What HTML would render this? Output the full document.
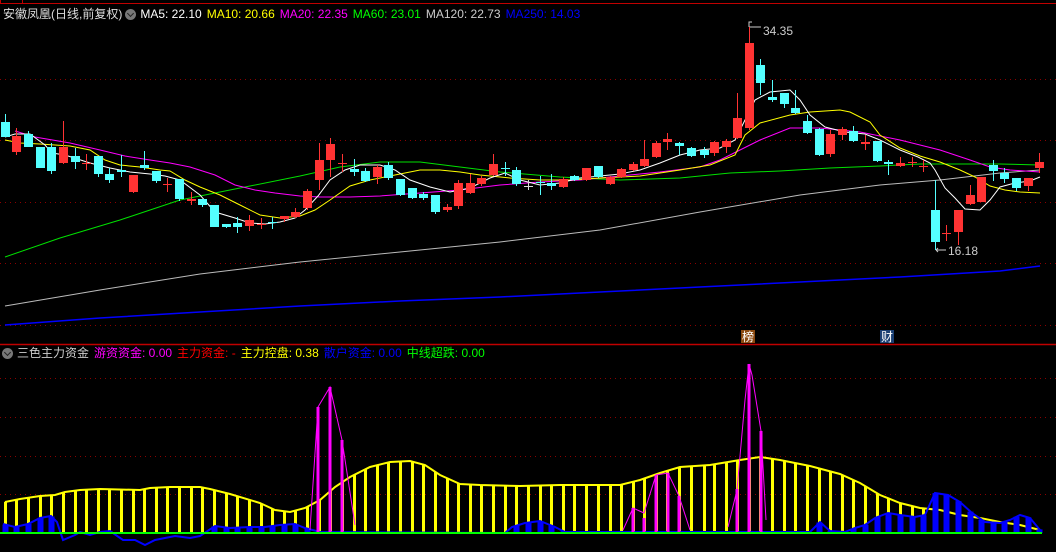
<!DOCTYPE html>
<html><head><meta charset="utf-8">
<style>
html,body{margin:0;padding:0;background:#000;width:1056px;height:552px;overflow:hidden}
svg{position:absolute;left:0;top:0}
.t{position:absolute;font-family:"Liberation Sans","Noto Sans CJK SC",sans-serif;font-size:12px;white-space:nowrap;line-height:14px}
.t span{margin-right:5px}
.ic{display:inline-block;width:11px;height:11px;border-radius:50%;background:#777;vertical-align:-2px;margin-right:4px;position:relative}
.ic:after{content:"";position:absolute;left:3px;top:2px;width:4px;height:4px;border-right:1.5px solid #222;border-bottom:1.5px solid #222;transform:rotate(45deg)}
</style></head><body>
<svg id="s" width="1056" height="552" xmlns="http://www.w3.org/2000/svg">
<g stroke="#8b0000" stroke-dasharray="1,4" stroke-width="1">
<line x1="0" y1="79.5" x2="1056" y2="79.5"/><line x1="0" y1="140.5" x2="1056" y2="140.5"/>
<line x1="0" y1="202.5" x2="1056" y2="202.5"/><line x1="0" y1="263.5" x2="1056" y2="263.5"/>
<line x1="0" y1="325.5" x2="1056" y2="325.5"/>
<line x1="0" y1="378.5" x2="1056" y2="378.5"/><line x1="0" y1="417.5" x2="1056" y2="417.5"/>
<line x1="0" y1="456.5" x2="1056" y2="456.5"/><line x1="0" y1="494.5" x2="1056" y2="494.5"/>
</g>
<line x1="0" y1="3.5" x2="1056" y2="3.5" stroke="#c00000"/>
<line x1="0.5" y1="0" x2="0.5" y2="3" stroke="#c00000"/><line x1="22.5" y1="0" x2="22.5" y2="3" stroke="#c00000"/>
<line x1="0" y1="344.5" x2="1056" y2="344.5" stroke="#c00000" stroke-width="1.5"/>
<rect x="741" y="330" width="14" height="13" fill="#8b4a10"/>
<text x="742" y="341" fill="#fff" font-size="12" font-family="Noto Sans CJK SC,sans-serif">榜</text>
<rect x="880" y="330" width="14" height="13" fill="#1a3f73"/>
<text x="881" y="341" fill="#fff" font-size="12" font-family="Noto Sans CJK SC,sans-serif">财</text>
<text x="763" y="35" fill="#ccc" font-size="12" font-family="Liberation Sans,sans-serif">34.35</text>
<path d="M749 27 v-5 h3 M749 27 h12" stroke="#ccc" fill="none"/>
<text x="948" y="255" fill="#ccc" font-size="12" font-family="Liberation Sans,sans-serif">16.18</text>
<path d="M936 250 h10 M936 250 l2 -2 M936 250 l2 2" stroke="#ccc" fill="none"/>
<g id="g"></g>
</svg>
<div class="t" style="left:3px;top:7px;color:#ddd"><span style="margin-right:3px">安徽凤凰(日线,前复权)</span><i class="ic"></i><span style="color:#fff">MA5: 22.10</span><span style="color:#ff0">MA10: 20.66</span><span style="color:#f0f">MA20: 22.35</span><span style="color:#0f0">MA60: 23.01</span><span style="color:#ccc">MA120: 22.73</span><span style="color:#00f">MA250: 14.03</span></div>
<div class="t" style="left:2px;top:346px;color:#ccc"><i class="ic"></i><span>三色主力资金</span><span style="color:#f0f">游资资金: 0.00</span><span style="color:#f00">主力资金: -</span><span style="color:#ff0">主力控盘: 0.38</span><span style="color:#00f">散户资金: 0.00</span><span style="color:#0f0">中线超跌: 0.00</span></div>
<script>
var NS="http://www.w3.org/2000/svg",G=document.getElementById("g");
function el(n,a){var e=document.createElementNS(NS,n);for(var k in a)e.setAttribute(k,a[k]);G.appendChild(e);return e}
function pl(p,c,w){el("polyline",{points:p.map(function(q){return q.join(",")}).join(" "),fill:"none",stroke:c,"stroke-width":w||1})}
function interp(p,x){if(x<=p[0][0])return p[0][1];for(var i=1;i<p.length;i++)if(x<=p[i][0]){var a=p[i-1],b=p[i];return a[1]+(b[1]-a[1])*(x-a[0])/(b[0]-a[0])}return p[p.length-1][1]}
var C=[[1,'c',122,137,114,137],[12,'r',136,152,128,155],[24,'c',134,147,131,147],[36,'c',147,168,147,168],[47,'c',147,171,143,174],[59,'r',147,163,121,164],[71,'c',156,162,148,169],[82,'r',163,164,154,170],[94,'c',156,174,156,177],[105,'c',174,180,168,183],[117,'c',170,172,155,177],[129,'r',175,192,175,193],[140,'c',165,168,151,170],[152,'c',171,181,171,183],[163,'r',184,185,178,192],[175,'c',179,199,179,201],[187,'r',199,201,192,205],[198,'c',199,205,199,207],[210,'c',205,227,205,227],[222,'c',224,227,224,228],[233,'c',223,227,217,233],[245,'r',220,226,215,231],[257,'r',224,225,218,229],[268,'c',222,223,217,229],[280,'r',216,219,216,222],[291,'r',212,217,208,218],[303,'r',191,208,189,210],[315,'r',160,180,143,190],[326,'r',144,160,138,177],[338,'r',163,164,154,172],
[350,'c',169,172,159,176],[361,'c',171,181,168,182],[373,'r',167,177,165,184],[384,'c',165,178,162,180],[396,'c',179,195,179,196],[408,'c',188,198,188,199],[419,'c',194,198,192,200],[431,'c',195,212,195,214],[443,'r',207,210,204,212],[454,'r',183,206,180,209],[466,'r',183,193,174,194],[477,'r',178,184,176,186],[489,'r',164,175,154,176],[501,'c',168,169,162,176],[512,'c',170,184,167,186],[524,'w',186,187,180,190],[536,'c',182,183,176,195],[547,'c',183,186,174,190],[559,'r',179,187,177,188],[570,'c',176,180,175,181],[582,'r',168,180,168,181],[594,'c',166,177,166,178],[606,'r',177,184,176,185],[617,'r',169,177,168,178],[629,'r',164,170,162,171],[640,'r',159,166,140,167],[652,'r',143,157,141,158],[663,'r',139,142,133,150],[675,'c',143,146,142,155],[687,'c',148,156,147,157],
[700,'c',150,155,147,158],[710,'r',142,153,141,156],[722,'r',141,147,139,153],[733,'r',118,138,93,139],[745,'r',43,128,27,130],[756,'c',65,83,59,95],[768,'c',97,100,80,102],[780,'c',93,104,93,108],[791,'c',108,113,90,114],[803,'c',121,133,115,134],[815,'c',129,155,128,156],[826,'r',134,154,130,157],[838,'r',129,135,127,140],[849,'c',131,141,126,142],[861,'r',142,144,135,150],[873,'c',141,161,141,162],[884,'c',162,164,160,175],[896,'r',163,166,157,167],[908,'r',162,163,157,167],[919,'r',166,167,160,172],[931,'c',210,242,180,250],[942,'r',233,234,225,241],[954,'r',210,232,210,245],[966,'r',195,204,185,205],[977,'r',177,202,177,202],[989,'c',165,171,160,181],[1000,'c',173,179,168,183],[1012,'c',178,188,178,191],[1024,'r',178,186,178,191],[1035,'r',162,168,153,173]];
var col={r:'#ff3333',c:'#54ffff',w:'#ddd'};
var MA250=[[5,325],[100,318],[200,312],[300,306],[400,301],[500,297],[600,292],[700,287],[800,282],[900,277],[1000,271],[1040,266]];
var MA120=[[5,306],[100,290],[200,274],[300,262],[400,252],[500,242],[600,230],[700,212],[800,195],[880,185],[940,180],[1000,173],[1040,170]];
var MA60=[[5,257],[60,238],[120,220],[180,200],[240,188],[300,176],[340,167],[380,162],[420,162],[460,167],[500,172],[560,177],[620,180],[680,178],[730,173],[780,171],[830,168],[880,166],[920,164],[960,164],[1000,164],[1040,165]];
var MA20=[[15,131],[35,137],[70,143],[100,150],[125,156],[150,160],[170,163],[190,167],[215,175],[235,185],[255,190],[275,193],[300,196],[320,197],[350,197],[380,196],[420,193],[460,190],[500,185],[540,182],[580,180],[620,176],[660,172],[700,167],[720,160],[740,150],[760,140],[790,128],[820,128],[860,132],[900,140],[940,150],[970,160],[990,167],[1010,170],[1040,172]];
var MA10=[[5,140],[20,143],[40,144],[70,146],[90,150],[105,160],[120,165],[140,167],[160,170],[170,171],[185,180],[200,187],[220,195],[240,205],[260,215],[280,218],[300,216],[315,210],[330,200],[350,186],[370,180],[395,175],[420,170],[440,170],[460,172],[480,175],[510,178],[540,180],[570,180],[600,178],[640,176],[680,170],[710,165],[735,155],[745,135],[760,123],[790,115],[810,112],[840,110],[850,112],[870,122],[880,135],[900,148],[920,156],[940,162],[960,170],[975,177],[990,186],[1005,190],[1020,192],[1040,193]];
var MA5=[[5,137],[15,134],[30,134],[45,145],[52,153],[65,155],[90,163],[110,168],[130,172],[150,174],[165,176],[180,180],[200,195],[215,212],[235,218],[250,223],[265,224],[280,222],[295,218],[305,210],[318,196],[330,180],[345,170],[360,165],[380,165],[395,170],[410,180],[430,187],[450,192],[470,188],[490,178],[505,173],[520,180],[540,185],[560,183],[580,178],[600,176],[620,174],[640,170],[660,163],[680,155],[700,150],[720,148],[735,140],[745,120],[755,100],[770,92],[790,90],[800,100],[810,115],[825,127],[845,132],[865,134],[880,140],[900,150],[918,157],[930,163],[935,170],[945,188],[955,198],[965,209],[980,210],[990,200],[1000,187],[1015,183],[1030,181],[1040,177]];
pl(MA250,'#0000ff',1.5);pl(MA120,'#bbb');pl(MA60,'#00e000');pl(MA20,'#ff00ff');pl(MA10,'#ffff00');pl(MA5,'#fff');
C.forEach(function(d){var x=d[0],c=col[d[1]],cx=x+4.5;
el("line",{x1:cx,y1:d[4],x2:cx,y2:d[5],stroke:c});
el("rect",{x:x,y:d[2],width:9,height:Math.max(1,d[3]-d[2]),fill:c});});
// bottom panel
var BASE=533;
var Y=[[5,502],[20,499],[40,496],[55,495],[65,492],[80,490],[100,489],[140,490],[150,488],[170,487],[200,487],[210,489],[230,494],[260,503],[275,510],[290,512],[305,508],[320,500],[335,487],[350,477],[370,467],[390,462],[410,461],[425,465],[440,475],[460,484],[480,485],[520,486],[560,485],[600,485],[620,485],[640,480],[660,473],[680,467],[710,465],[740,460],[760,457],[780,460],[810,466],[840,474],[860,483],[880,495],[900,503],[920,508],[940,510],[960,515],[980,518],[1000,522],[1020,525],[1040,530]];
var B=[[3,524],[15,527],[28,524],[40,518],[51,516],[57,522],[63,540],[75,535],[80,532],[90,535],[100,532],[110,531],[123,540],[135,540],[145,545],[155,540],[165,538],[175,536],[190,538],[200,536],[215,526],[230,528],[250,527],[265,527],[280,525],[295,524],[305,528],[320,532],[505,533],[512,527],[525,523],[540,521],[555,527],[565,532],[810,532],[820,522],[830,531],[845,532],[855,528],[865,525],[875,518],[888,513],[900,515],[915,517],[925,515],[935,493],[948,495],[960,502],[972,513],[985,522],[1000,523],[1010,520],[1020,515],[1030,518],[1040,530]];
C.forEach(function(d){var cx=d[0]+4.5,y=interp(Y,cx);el("rect",{x:cx-1.5,y:y,width:3,height:BASE-y,fill:'#ffff00'});});
pl(Y,'#ffff00',2);
C.forEach(function(d){var cx=d[0]+4.5;if(cx<330||(cx>500&&cx<570)||cx>810){var y=interp(B,cx);if(y<BASE-1)el("rect",{x:cx-3,y:y,width:6,height:BASE-y,fill:'#0000ff'});}});
pl(B,'#0000ff',2);
var M=[[318,407],[330,387],[342,440],[633,508],[644,518],[656,475],[668,473],[679,496],[737,489],[749,364],[761,431]];
M.forEach(function(m){el("rect",{x:m[0]-1.5,y:m[1],width:3,height:BASE-m[1],fill:'#ff00ff'});});
pl([[310,530],[318,407],[330,387],[342,440],[355,525]],'#ff00ff');
pl([[623,530],[633,508],[644,513],[656,475],[668,473],[679,496],[690,530]],'#ff00ff');
pl([[728,527],[737,490],[745,400],[749,364],[752,375],[761,431],[766,520]],'#ff00ff');
el("line",{x1:0,y1:BASE,x2:1042,y2:BASE,stroke:'#00ff00','stroke-width':2});
</script>
</body></html>
